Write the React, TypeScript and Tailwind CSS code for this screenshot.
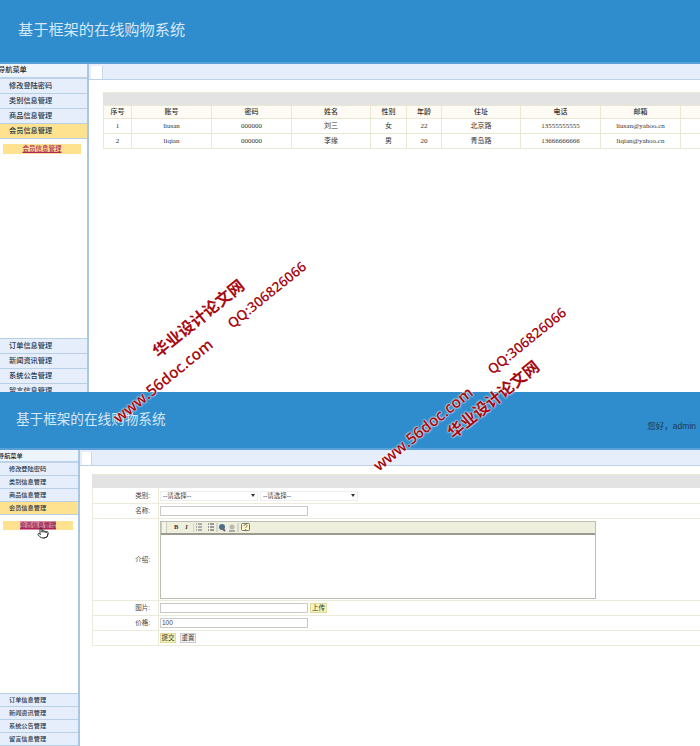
import { Pointer } from "lucide-react";

const cjk = "font-['Liberation_Sans','Noto_Sans_CJK_SC',sans-serif]";
const serif = "font-['Liberation_Serif','Noto_Sans_CJK_SC',serif]";

function Side({ label, active, h }: { label: string; active?: boolean; h: string }) {
  return (
    <div className={`${h} flex items-center pl-[9px] border-b border-[#b9cfe6] font-medium text-[#26364a] ${active ? "bg-[#ffe28f]" : "bg-[#e6eefb]"}`}>
      {label}
    </div>
  );
}

function Sidebar({ w, text, rowH, activeChild, cursor, tall }: { w: string; text: string; rowH: string; activeChild: string; cursor?: boolean; tall: string }) {
  return (
    <div className={`${w} ${tall} ${text} shrink-0 flex flex-col border-r-2 border-[#a9c6e4] bg-white overflow-hidden`}>
      <div className={`${rowH} flex items-center bg-[#eef4fc] border-b-2 border-[#bcd2ea] font-medium text-[#222]`}>
        <span className="-ml-[2px]">导航菜单</span>
      </div>
      <div>
        <Side h={rowH} label="修改登陆密码" />
        <Side h={rowH} label="类别信息管理" />
        <Side h={rowH} label="商品信息管理" />
        <Side h={rowH} label="会员信息管理" active />
      </div>
      <div className={`${activeChild} relative flex items-center justify-center bg-[#ffe28f] font-medium text-[#b0245c] underline`}>
        <span className={cursor ? "bg-[#d88aa0] text-[#8a2050]" : ""}>会员信息管理</span>
        {cursor && <Pointer className="absolute left-[34px] top-[6px] text-[#333]" size={12} strokeWidth={2} />}
      </div>
      <div className="flex-1" />
      <div className="border-t border-[#b9cfe6]">
        <Side h={rowH} label="订单信息管理" />
        <Side h={rowH} label="新闻资讯管理" />
        <Side h={rowH} label="系统公告管理" />
        <Side h={rowH} label="留言信息管理" />
      </div>
    </div>
  );
}

function TabBar({ h, tab }: { h: string; tab: string }) {
  return (
    <div className={`${h} flex bg-[#e6eefb] border-b border-[#bcd2ea]`}>
      <div className={`${tab} ml-[2px] mt-[2px] bg-white border-r border-[#c8d8ec]`} />
    </div>
  );
}

const cols = ["w-[28px]", "w-[80px]", "w-[80px]", "w-[79px]", "w-[36px]", "w-[35px]", "w-[79px]", "w-[80px]", "w-[80px]", "w-[20px]"];
const head = ["序号", "账号", "密码", "姓名", "性别", "年龄", "住址", "电话", "邮箱", ""];
const rows = [
  ["1", "liusan", "000000", "刘三", "女", "22", "北京路", "13555555555", "liusan@yahoo.cn", ""],
  ["2", "liqian", "000000", "李缘", "男", "20", "青岛路", "13666666666", "liqian@yahoo.cn", ""],
];

function MemberTable() {
  return (
    <div className={`mt-[12px] ml-[14px] w-[597px] text-[7px] text-[#333] ${serif}`}>
      <div className="h-[13px] bg-[#e3e3e3] border-t border-[#ebe9d6]" />
      <div className="h-[14px] flex bg-[#fdfbf4] border-y border-[#e9e8d2] font-medium">
        {head.map((t, i) => (
          <div key={i} className={`${cols[i]} flex items-center justify-center border-l border-[#e9e8d2]`}>{t}</div>
        ))}
      </div>
      {rows.map((r) => (
        <div key={r[0]} className="h-[15px] flex border-b border-[#e9e8d2]">
          {r.map((t, i) => (
            <div key={i} className={`${cols[i]} flex items-center justify-center border-l border-[#e9e8d2]`}>{t}</div>
          ))}
        </div>
      ))}
    </div>
  );
}

function FormRow({ label, h, children }: { label?: string; h: string; children: React.ReactNode }) {
  return (
    <div className={`${h} flex border-b border-[#ecebd9]`}>
      <div className="w-[66px] shrink-0 pr-[8px] flex items-center justify-end border-r border-[#ecebd9] text-[#444]">{label}</div>
      <div className="flex-1 flex items-center gap-[2px] pl-[1px]">{children}</div>
    </div>
  );
}

function Select() {
  return (
    <div className="w-[98px] h-[10px] flex items-center justify-between px-[2px] bg-white border border-[#eeeeee] text-[#444]">
      <span>--请选择--</span>
      <span className="w-0 h-0 border-x-[2px] border-x-transparent border-t-[3px] border-t-[#333]" />
    </div>
  );
}

function Input({ value }: { value?: string }) {
  return <div className="w-[148px] h-[10px] flex items-center px-[1px] bg-white border border-[#c9c9c9] text-[#444]">{value}</div>;
}

function Toolbar() {
  return (
    <div className="h-[13px] flex items-center bg-[#efefde] border-b-2 border-[#9a9a8e] text-[#333]">
      <div className="w-[6px] h-full border-r border-[#ccccbb] border-l bg-[#f4f4e8]" />
      <b className="ml-[7px] font-['Liberation_Serif',serif]">B</b>
      <i className="ml-[7px] font-bold font-['Liberation_Serif',serif]">I</i>
      <svg width="46" height="9" viewBox="0 0 46 9" className="ml-[5px]">
        <path d="M0 0v9" stroke="#bbb" />
        <path d="M3 1h1M3 4h1M3 7h1M5 1h4M5 4h4M5 7h4" stroke="#667" />
        <path d="M15 1h1M15 4h1M15 7h1M17 1h4M17 4h4M17 7h4" stroke="#445" />
        <path d="M24 0v9" stroke="#bbb" />
        <circle cx="29" cy="4" r="3" fill="#4a6f8a" />
        <path d="M29 5l3 3" stroke="#667" strokeWidth="2" />
        <circle cx="39" cy="4" r="2.500" fill="#b9b9ad" />
        <path d="M36 8h6" stroke="#aaa" strokeWidth="2" />
        <path d="M45 0v9" stroke="#bbb" />
      </svg>
      <svg width="9" height="9" viewBox="0 0 9 9" className="ml-[2px]">
        <rect x="0.500" y="0.500" width="8" height="7" rx="1" fill="#fff6c8" stroke="#777" />
        <path d="M3 3c0-2 3-2 3 0 0 1-1.500 1-1.500 2M4.500 6v1" stroke="#555" fill="none" strokeWidth="0.800" />
      </svg>
    </div>
  );
}

function ProductForm() {
  return (
    <div className={`mt-[8px] ml-[12px] w-[620px] text-[6.500px] ${cjk}`}>
      <div className="h-[14px] bg-[#e3e3e3] border-t border-[#ebe9d6]" />
      <div className="border-l border-[#ecebd9]">
        <FormRow h="h-[16px]" label="类别:"><Select /><Select /></FormRow>
        <FormRow h="h-[15px]" label="名称:"><Input /></FormRow>
        <FormRow h="h-[82px]" label="介绍:">
          <div className="w-[436px] h-[78px] border border-[#bdbdb0]">
            <Toolbar />
          </div>
        </FormRow>
        <FormRow h="h-[15px]" label="图片:">
          <Input />
          <div className="h-[10px] w-[17px] flex items-center justify-center bg-[#f5f5b8] border border-[#dddd99] text-[#333]">上传</div>
        </FormRow>
        <FormRow h="h-[15px]" label="价格:"><Input value="100" /></FormRow>
        <FormRow h="h-[15px]">
          <div className="h-[10px] w-[16px] flex items-center justify-center bg-[#f5f5b8] border border-[#dddd99] text-[#333]">提交</div>
          <div className="h-[10px] w-[16px] ml-[2px] flex items-center justify-center bg-[#f3f3f3] border border-[#cccccc] text-[#333]">重置</div>
        </FormRow>
      </div>
    </div>
  );
}

const marks = [
  { t: "华业设计论文网", x: "left-[199px]", y: "top-[319px]", s: "text-[16px] font-bold" },
  { t: "www.56doc.com", x: "left-[163px]", y: "top-[381px]", s: "text-[15.500px] font-semibold font-['Open_Sans',sans-serif]" },
  { t: "QQ:306826066", x: "left-[267px]", y: "top-[295px]", s: "text-[13.800px] font-semibold font-['Open_Sans',sans-serif]" },
  { t: "www.56doc.com", x: "left-[423px]", y: "top-[429px]", s: "text-[15.500px] font-semibold font-['Open_Sans',sans-serif]" },
  { t: "QQ:306826066", x: "left-[527px]", y: "top-[341px]", s: "text-[13.800px] font-semibold font-['Open_Sans',sans-serif]" },
  { t: "华业设计论文网", x: "left-[494px]", y: "top-[400px]", s: "text-[16px] font-bold" },
];

export default function App() {
  return (
    <div className={`relative w-[700px] h-[746px] overflow-hidden bg-white ${cjk}`}>
      <div className="h-[392px] flex flex-col overflow-hidden">
        <div className="h-[64px] shrink-0 flex items-center pl-[18px] pb-[2px] bg-[#2f8ccd] border-b-2 border-[#5a9fd8] text-[15.200px] text-[#d6e8f5]">
          基于框架的在线购物系统
        </div>
        <div className="flex flex-1 min-h-0">
          <Sidebar w="w-[89px]" text="text-[7.200px]" rowH="h-[15px]" tall="h-[335px]" activeChild="mt-[5px] ml-[3px] mr-[6px] h-[10px] text-[6.500px]" />
          <div className="flex-1 min-w-0">
            <TabBar h="h-[16px]" tab="w-[12px]" />
            <MemberTable />
          </div>
        </div>
      </div>
      <div className="h-[354px] flex flex-col overflow-hidden">
        <div className="h-[58px] shrink-0 flex items-center justify-between pl-[16px] pr-[4px] bg-[#2f8ccd] border-b-2 border-[#5a9fd8] text-[#d6e8f5]">
          <span className="text-[13.600px]">基于框架的在线购物系统</span>
          <span className="text-[8.500px] text-[#1d3a55] mt-[13px]">您好，admin</span>
        </div>
        <div className="flex flex-1 min-h-0">
          <Sidebar w="w-[80px]" text="text-[6.200px]" rowH="h-[13px]" tall="h-[296px]" activeChild="mt-[6px] ml-[3px] mr-[5px] h-[9px] text-[6px]" cursor />
          <div className="flex-1 min-w-0">
            <TabBar h="h-[16px]" tab="w-[10px]" />
            <ProductForm />
          </div>
        </div>
      </div>
      {marks.map((m, i) => (
        <div key={i} className={`absolute ${m.x} ${m.y} ${m.s} -translate-x-1/2 -translate-y-1/2 -rotate-[39deg] whitespace-nowrap text-[#a60a12] [text-shadow:0_0_2px_#ffffff,0_0_2px_#ffffff]`}>
          {m.t}
        </div>
      ))}
    </div>
  );
}
